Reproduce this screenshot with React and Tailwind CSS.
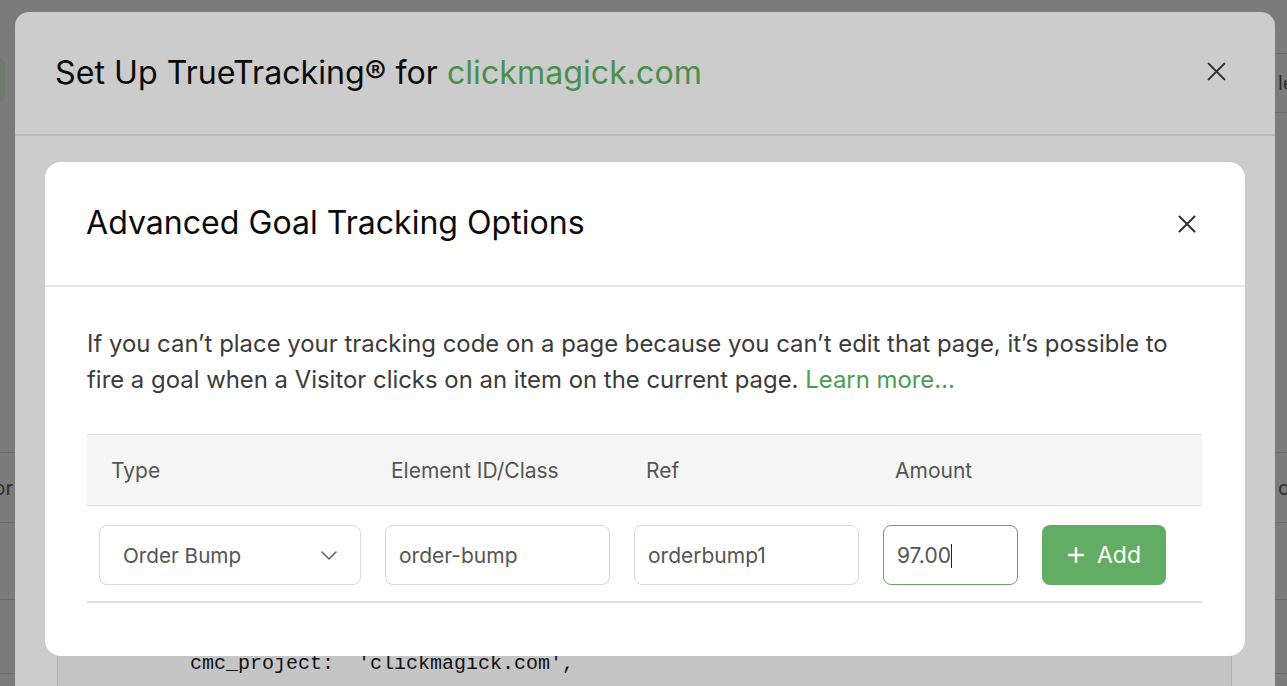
import React from "react";

function XIcon({ className }) {
  return (
    <svg viewBox="0 0 24 24" className={className} fill="none" stroke="currentColor" strokeWidth="2.4" strokeLinecap="round">
      <path d="M3 3 L21 21 M21 3 L3 21" />
    </svg>
  );
}

export default function App() {
  return (
    <div className="relative w-[1287px] h-[686px] overflow-hidden bg-[#7b7b7b]" style={{ fontFamily: "Inter, 'Noto Sans', sans-serif" }}>
      {/* dimmed page behind */}
      <div className="flex flex-col w-full h-full text-[20px] text-[#2e2e2e]">
        <div className="h-[53px] shrink-0" />
        <div className="flex justify-between h-[60px] shrink-0">
          <div className="-ml-[60px] w-[65px] h-[46px] mt-[4px] rounded-lg bg-[#6f7a6f]" />
          <div className="w-[12px] border-y border-[#6a6a6a] flex items-center pl-[3px] whitespace-nowrap overflow-hidden">lete</div>
        </div>
        <div className="h-[339px] shrink-0" />
        <div className="border-t border-[#6c6c6c] h-[70px] shrink-0 flex items-center justify-between">
          <div className="w-[13px] flex justify-end whitespace-nowrap">Visitor</div>
          <div className="w-[9px] whitespace-nowrap">overview</div>
        </div>
        <div className="border-t border-[#6c6c6c] h-[77px] shrink-0" />
        <div className="border-t border-[#6c6c6c] h-[74px] shrink-0" />
        <div className="border-t border-[#6c6c6c] h-[40px] shrink-0" />
      </div>

      {/* outer modal */}
      <div className="absolute left-[15px] top-[12px] w-[1260px] h-[720px] rounded-[14px] bg-[#cccccc] flex flex-col">
        <div className="h-[124px] shrink-0 flex items-center justify-between pl-[40px] pr-[48px] border-b-2 border-[#b8b8b8]">
          <div className="text-[32.2px] text-[#0a0a0a]">
            Set Up TrueTracking® for <span className="text-[#4b8f4f]">clickmagick.com</span>
          </div>
          <XIcon className="w-[21px] h-[21px] text-[#2f2f2f] -mt-[4px]" />
        </div>
        <div className="pl-[42px] pr-[43px] pt-[462px]">
          <div className="h-[200px] border border-[#b4b4b4] bg-[#c5c5c5] pt-[53px] pl-[132px]">
            <div className="text-[20px] leading-[24px] text-[#111] whitespace-pre" style={{ fontFamily: "'Liberation Mono', monospace" }}>
              {"cmc_project:  'clickmagick.com',"}
            </div>
          </div>
        </div>
      </div>

      {/* inner modal */}
      <div className="absolute left-[45px] top-[162px] w-[1200px] h-[494px] rounded-[16px] bg-white flex flex-col">
        <div className="h-[125px] shrink-0 flex items-center justify-between pl-[41px] pr-[48px] border-b-2 border-[#e6e6e6]">
          <div className="text-[32.1px] text-[#0a0a0a]">Advanced Goal Tracking Options</div>
          <XIcon className="w-[20px] h-[20px] text-[#333]" />
        </div>
        <div className="pl-[42px] pr-[43px] pt-[39px]">
          <p className="text-[23.9px] leading-[36px] text-[#3b3b3b]">
            If you can’t place your tracking code on a page because you can’t edit that page, it’s possible to fire a goal when a Visitor clicks on an item on the current page.{" "}
            <span className="text-[#4a9d4f]">Learn more…</span>
          </p>

          <div className="mt-[36px] w-[1115px]">
            <div className="grid grid-cols-[286px_249px_249px_159px_148px_24px] h-[72px] pt-[2px] bg-[#f5f5f5] border-y border-[#dedede] items-center text-[21px] text-[#555]">
              <div className="pl-[24px]">Type</div>
              <div className="pl-[18px]">Element ID/Class</div>
              <div className="pl-[24px]">Ref</div>
              <div className="pl-[24px]">Amount</div>
              <div />
              <div />
            </div>
            <div className="grid grid-cols-[286px_249px_249px_159px_148px_24px] h-[97px] pt-[2px] border-b-2 border-[#dde0e4] items-center text-[21px] text-[#555]">
              <div className="px-[12px]">
                <div className="h-[60px] rounded-[8px] border border-[#d9d9d9] flex items-center justify-between pl-[23px] pr-[23px] pt-[2px] text-[20.7px]">
                  <span>Order Bump</span>
                  <svg viewBox="0 0 16 9" className="w-[16px] h-[9px] text-[#666]" fill="none" stroke="currentColor" strokeWidth="1.6" strokeLinecap="round" strokeLinejoin="round">
                    <path d="M1 1 L8 8 L15 1" />
                  </svg>
                </div>
              </div>
              <div className="px-[12px]">
                <div className="h-[60px] rounded-[8px] border border-[#d9d9d9] flex items-center pl-[13px] pt-[2px]">order-bump</div>
              </div>
              <div className="px-[12px]">
                <div className="h-[60px] rounded-[8px] border border-[#d9d9d9] flex items-center pl-[13px] pt-[2px]">orderbump1</div>
              </div>
              <div className="px-[12px]">
                <div className="h-[60px] rounded-[8px] border border-[#62a862] flex items-center pl-[13px] pt-[2px]">
                  <span>97.00</span>
                  <span className="w-[1px] h-[24px] bg-[#222]" />
                </div>
              </div>
              <div className="px-[12px]">
                <div className="h-[60px] rounded-[8px] bg-[#63ac63] flex items-center justify-center gap-[12px] text-white text-[23px] pt-[1px]">
                  <svg viewBox="0 0 18 18" className="w-[18px] h-[18px]" fill="none" stroke="currentColor" strokeWidth="2.4">
                    <path d="M9 1 V17 M1 9 H17" />
                  </svg>
                  <span>Add</span>
                </div>
              </div>
              <div />
            </div>
          </div>
        </div>
      </div>
    </div>
  );
}
